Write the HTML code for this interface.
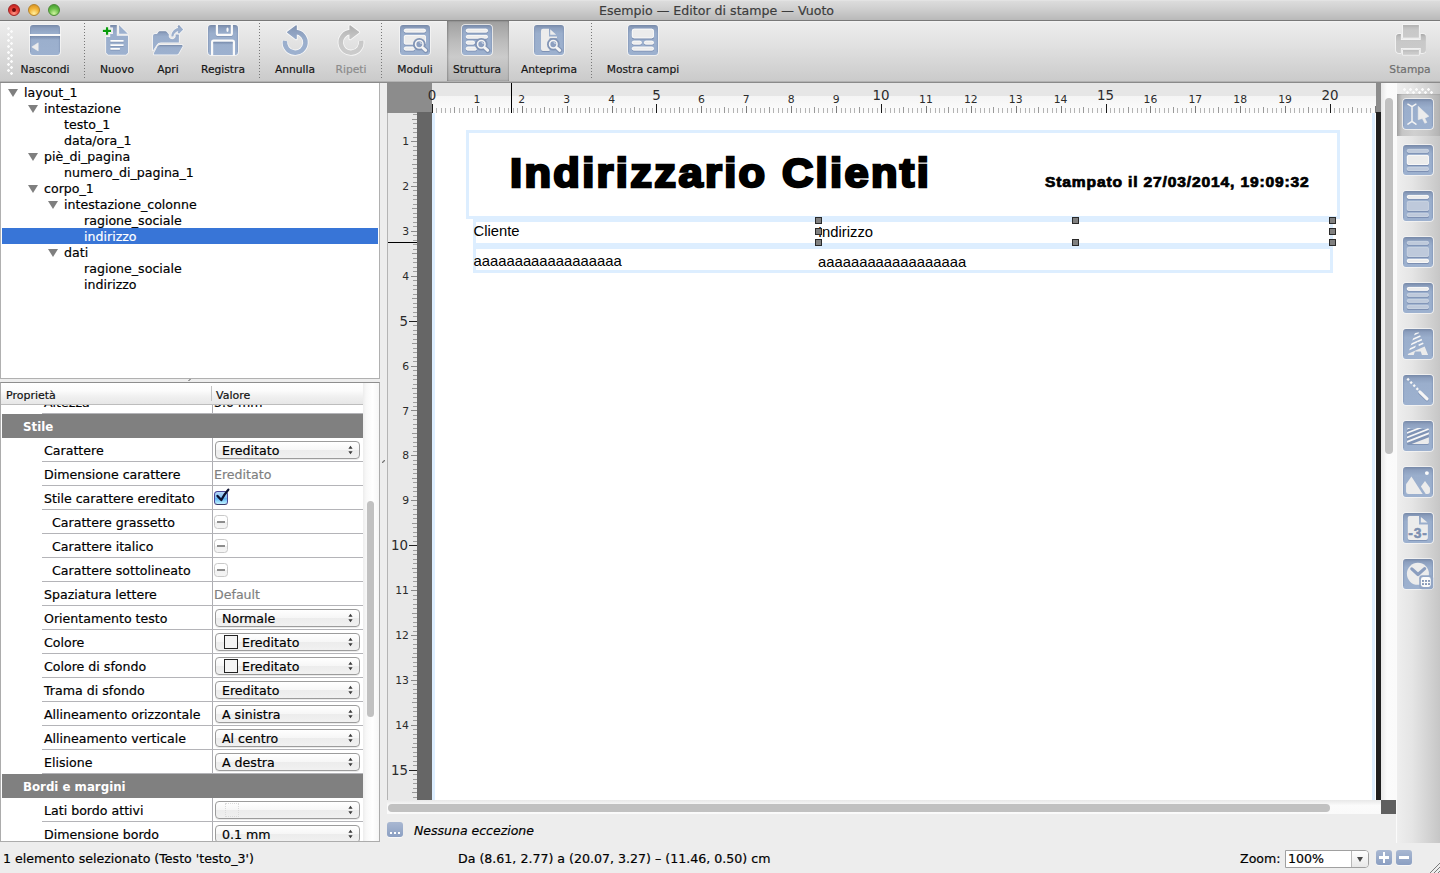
<!DOCTYPE html>
<html lang="it">
<head>
<meta charset="utf-8">
<title>Esempio — Editor di stampe — Vuoto</title>
<style>
*{box-sizing:border-box;margin:0;padding:0}
html,body{width:1440px;height:873px;overflow:hidden;background:#ededed}
body{position:relative;font-family:"DejaVu Sans","Liberation Sans",sans-serif;font-size:12.6px;color:#000;-webkit-text-stroke:.18px currentColor}
i,b{font-style:normal;font-weight:normal;display:block}
.abs{position:absolute}
/* ---- title bar */
#titlebar{position:absolute;left:0;top:0;width:1440px;height:21px;background:linear-gradient(#e8e8e8 0%,#dcdcdc 6%,#cfcfcf 45%,#b9b9b9 100%);border-bottom:1px solid #787878}
#titlebar .t{position:absolute;left:599px;top:3px;font-size:12.6px;color:#3c3c3c;line-height:16px;white-space:nowrap}
.tl{position:absolute;top:4px;width:12px;height:12px;border-radius:50%}
.tl.r{left:8px;background:radial-gradient(circle at 50% 85%,#ff9a8a 0%,#e8433a 45%,#b81c1c 100%);border:1px solid #a02222}
.tl.r:after{content:"";position:absolute;left:3px;top:3px;width:4px;height:4px;border-radius:50%;background:#6a0a0a}
.tl.y{left:28px;background:radial-gradient(circle at 50% 85%,#fff0a0 0%,#f3b53a 50%,#d08a1c 100%);border:1px solid #b5832a}
.tl.g{left:48px;background:radial-gradient(circle at 50% 85%,#d0f5a0 0%,#6cc04a 50%,#3c962a 100%);border:1px solid #4b8a36}
/* ---- toolbar */
#toolbar{position:absolute;left:0;top:21px;width:1440px;height:62px;background:linear-gradient(#f4f4f4 0,#ececec 2px,#e1e1e1 40%,#cacaca 100%);border-bottom:1px solid #8a8a8a}
#toolbar:after{content:"";position:absolute;left:0;right:0;bottom:0;height:1px;background:#b2b2b2}
.tb{position:absolute;top:0;width:32px;height:60px}
.tb svg{position:absolute;top:3px;left:0}
.tb span{position:absolute;top:42px;left:-40px;right:-40px;text-align:center;font-size:10.7px;line-height:14px;color:#151515;white-space:nowrap}
.tb.dis span{color:#8c8c8c}
.tb.dis.st span{color:#6e6e6e}
.sep{position:absolute;top:2px;height:56px;width:1px;background:repeating-linear-gradient(#777 0,#777 1px,rgba(0,0,0,0) 1px,rgba(0,0,0,0) 3px)}
.grip{position:absolute;left:7px;top:6px;width:6px;height:48px;background-image:radial-gradient(circle at 1.5px 1.5px,#fafafa 1px,rgba(255,255,255,0) 1.6px),radial-gradient(circle at 4.5px 4.5px,#fafafa 1px,rgba(255,255,255,0) 1.6px);background-size:6px 6px}
.pressed{position:absolute;left:447px;top:0;width:62px;height:60px;background:linear-gradient(#a0a0a0 0%,#bcbcbc 35%,#cbcbcb 60%,#b4b4b4 100%);box-shadow:inset 1px 0 2px rgba(0,0,0,.25),inset -1px 0 1px rgba(0,0,0,.12)}
/* ---- tree */
#tree{position:absolute;left:0;top:83px;width:380px;height:296px;background:#fff;border:1px solid #b0b0b0;border-top:0;overflow:hidden}
.tr{position:absolute;left:1px;width:376px;height:16px}
.tr span{position:absolute;top:1px;line-height:16px;white-space:nowrap}
.tr.sel{background:#3875d7;color:#fff}
.ar{position:absolute;top:5px;width:0;height:0;border-left:5px solid transparent;border-right:5px solid transparent;border-top:8px solid #7f7f7f}
#hsplit{position:absolute;left:188px;top:379px;width:3px;height:2px;background:linear-gradient(135deg,rgba(0,0,0,0) 20%,#777 50%,rgba(0,0,0,0) 80%)}
/* ---- properties */
#props{position:absolute;left:0;top:382px;width:380px;height:460px;background:#fff;border:1px solid #acacac;border-top-color:#8e8e8e;overflow:hidden}
.ph{position:absolute;left:0;top:0;width:362px;height:22px;background:linear-gradient(#fff 0%,#fcfcfc 35%,#f0f0f0 65%,#e7e7e7 100%);border-bottom:1px solid #bdbdbd;font-size:11px}
.ph span{position:absolute;top:5px;line-height:15px;color:#111}
.ph i{position:absolute;left:210px;top:3px;width:1px;height:15px;background:#c3c3c3}
.pbody{position:absolute;left:0;top:22px;width:363px;height:436px;overflow:hidden}
.pr{position:absolute;left:0;width:363px;height:24px}
.pr:after{content:"";position:absolute;left:41px;right:0;bottom:0;height:1px;background:#b4b4b8}
.pr:before{content:"";position:absolute;left:211px;top:0;bottom:0;width:1px;background:#adadb2}
.pr .n{position:absolute;left:42px;top:5px;line-height:16px;white-space:nowrap}
.pr .v{position:absolute;left:213px;top:5px;line-height:16px;white-space:nowrap}
.pr .v.gr{color:#7f7f7f}
.pg{position:absolute;left:1px;width:362px;height:24px;background:#808080;color:#fff;font-weight:bold;font-size:11.8px;-webkit-text-stroke:0}
.pg span{position:absolute;left:21px;top:5px;line-height:16px}
.cb{position:absolute;left:214px;top:3px;width:145px;height:18px;border:1px solid #9c9c9c;border-radius:4px;background:linear-gradient(#ffffff 0%,#f6f6f6 50%,#ececec 51%,#f1f1f1 100%);box-shadow:0 1px 0 rgba(0,0,0,.08)}
.cb span{position:absolute;left:6px;top:1px;line-height:16px;white-space:nowrap}
.cb .ud{position:absolute;right:6px;top:3px}
.sw{position:absolute;left:8px;top:1px;width:14px;height:14px;border:1px solid #222;background:#f4f4f4}
.bw{position:absolute;left:9px;top:1px;width:14px;height:14px;border:1px dotted #dadada}
.ck{position:absolute;left:213px;top:5px;width:14px;height:14px;border:1px solid #4a4596;border-bottom-color:#3a3a6a;border-radius:3.5px;background:linear-gradient(#b4d6f9 0%,#84c2f6 45%,#5fb2f5 55%,#9adcfb 80%,#c4f2ff 100%)}
.ck svg{position:absolute;left:-2px;top:-6px}
.tri{position:absolute;left:213px;top:5px;width:14px;height:14px;border:1px solid #c9c9c9;border-radius:3.5px;background:linear-gradient(#fff 0,#fff 50%,#f1f1f1 51%,#f4f4f4 100%)}
.tri i{position:absolute;left:2px;top:5px;width:8px;height:2px;background:#8e8e8e}
.psb{position:absolute;left:362px;top:0;width:16px;height:458px;background:linear-gradient(90deg,#ededed 0,#f8f8f8 20%,#fff 60%,#f6f6f6 100%)}
.psb i{position:absolute;left:4px;top:118px;width:7px;height:216px;border-radius:4px;background:#c1c1c1}
/* ---- vsplit */
#vsplit{position:absolute;left:382px;top:460px;width:3px;height:3px;background:linear-gradient(135deg,rgba(0,0,0,0) 20%,#777 50%,rgba(0,0,0,0) 80%)}
/* ---- canvas */
#canvas{position:absolute;left:387px;top:83px;width:1009px;height:731px;overflow:hidden;background:#fff}
#rcorner{position:absolute;left:0;top:0;width:45px;height:30px;background:#8c8c8c}
#hruler{position:absolute;left:45px;top:0;width:944px;height:30px;background:linear-gradient(#e6e6e6 0,#e6e6e6 13px,#f4f4f4 13px,#fdfdfd 100%);z-index:3}
#hruler span{position:absolute;-webkit-text-stroke:0;width:40px;text-align:center;color:#2b2b2b;white-space:nowrap}
#hruler .rb{top:5px;font-size:13.4px;line-height:16px}
#hruler .rs{top:10px;font-size:10.8px;line-height:14px}
#vruler{position:absolute;left:0;top:29px;width:30px;height:688px;background:#e9e9e9;overflow:hidden;border-left:1px solid #b4b4b4}
#vruler span{position:absolute;-webkit-text-stroke:0;right:8px;text-align:right;color:#2b2b2b;white-space:nowrap}
#vruler .vb{font-size:13.4px;line-height:16px;right:9px}
#vruler .vs{font-size:10.8px;line-height:16px}
#vruler .cur{position:absolute;left:0;top:130px;width:45px;height:1px;background:#000}
#vband{position:absolute;left:30px;top:29px;width:15px;height:688px;background:#666}
#hcur{position:absolute;left:124px;top:0;z-index:4;width:1px;height:30px;background:#000}
#rband{position:absolute;left:989px;top:29px;width:5px;height:688px;background:#1f1f1f}
#rband:before{content:"";position:absolute;left:0;top:-29px;width:5px;height:29px;background:#8c8c8c}
#vsb{position:absolute;left:994px;top:0;width:15px;height:717px;background:linear-gradient(90deg,#e8e8e8,#fbfbfb 40%,#fafafa)}
#vsb i{position:absolute;left:4px;top:15px;width:8px;height:356px;border-radius:4px;background:#c1c1c1}
#hsb{position:absolute;left:0;top:717px;width:994px;height:14px;background:linear-gradient(#e8e8e8,#fbfbfb 40%,#fafafa)}
#hsb i{position:absolute;left:1px;top:4px;width:942px;height:8px;border-radius:4px;background:#c1c1c1}
#sbcorner{position:absolute;left:994px;top:717px;width:15px;height:14px;background:#606060}
#page{position:absolute;left:45px;top:29px;width:944px;height:688px;background:#fff;overflow:hidden}
/* ---- msg */
#msg{position:absolute;left:380px;top:815px;width:1016px;height:30px}
#msg .mi{position:absolute;left:7px;top:7px;width:16px;height:15px;border-radius:3px;background:linear-gradient(#a9b8d2,#8b9fc2);box-shadow:0 1px 0 #f8f8f8}
#msg .mi b{position:absolute;top:10px;width:2px;height:2px;background:#fff}
#msg .mi b:nth-child(1){left:3px}#msg .mi b:nth-child(2){left:7px}#msg .mi b:nth-child(3){left:11px}
#msg span{position:absolute;left:34px;top:8px;font-size:12.5px;line-height:16px;font-style:italic;white-space:nowrap}
/* ---- toolbox */
#toolbox{position:absolute;left:1396px;top:83px;width:44px;height:760px;background:linear-gradient(90deg,#eeeeee 0%,#e5e5e5 35%,#c6c6c6 100%);border-left:1px solid #fbfbfb}
.tsel{position:absolute;left:0;top:11px;width:43px;height:42px;background:linear-gradient(90deg,#a2a2a2 0,#c6c6c6 12%,#d0d0d0 40%,#c8c8c8 70%,#b2b2b2 100%);box-shadow:inset 0 1px 1px rgba(0,0,0,.08)}
.tool{position:absolute;left:5px;width:32px;height:32px}
.tgrip{position:absolute;left:6px;top:5px;width:30px;height:6px;background-image:radial-gradient(circle at 1.5px 1.5px,#fafafa 1px,rgba(255,255,255,0) 1.6px),radial-gradient(circle at 4.5px 4.5px,#fafafa 1px,rgba(255,255,255,0) 1.6px);background-size:6px 6px}
/* ---- status */
#status{position:absolute;left:0;top:843px;width:1440px;height:30px;background:#ededed}
#status span{position:absolute;top:8px;line-height:16px;white-space:nowrap}
#status .s1{left:3px}
#status .s2{left:458px}
#status .s3{left:1240px}
.zc{position:absolute;left:1285px;top:7px;width:84px;height:18px;border:1px solid #a0a0a0;border-radius:0 4px 4px 0;background:#fff}
.zc span{left:2px;top:0 !important;line-height:16px}
.zc i{position:absolute;right:0;top:0;width:17px;height:16px;border-left:1px solid #b8b8b8;background:linear-gradient(#fff,#e8e8e8);border-radius:0 3px 3px 0}
.zc b{position:absolute;right:5px;top:6px;width:0;height:0;border-left:3.5px solid transparent;border-right:3.5px solid transparent;border-top:5px solid #4a4a4a}
.zb{position:absolute;top:7px;width:16px;height:15px;border-radius:3px;background:linear-gradient(#a9b8d2,#8b9fc2);box-shadow:0 1px 0 #f8f8f8}
.zb .h{position:absolute;left:3px;top:6px;width:10px;height:2.5px;background:#fff}
.zb .v{position:absolute;left:6.75px;top:2px;width:2.5px;height:10.5px;background:#fff}
.rsz{position:absolute;right:-2px;bottom:-2px}
/* ---- page content */
.pgl{position:absolute;top:0;width:3px;height:688px;background:#ddeeff}
.bx{position:absolute;border:3px solid #ddeeff}
.bx.b2{border-width:3.4px}
.ttl{position:absolute;left:77.5px;top:36px;font-family:"Liberation Sans",sans-serif;font-weight:bold;font-size:40.5px;line-height:50px;white-space:nowrap;color:#000;-webkit-text-stroke:2.5px #000;letter-spacing:2.2px;transform:scaleX(1.072);transform-origin:0 0}
.dat{position:absolute;left:612.5px;top:61px;font-family:"Liberation Sans",sans-serif;font-weight:bold;font-size:13.8px;line-height:20px;white-space:nowrap;color:#000;-webkit-text-stroke:.7px #000;letter-spacing:.75px;transform:scaleX(1.13);transform-origin:0 0}
.tx{position:absolute;-webkit-text-stroke:0;font-family:"Liberation Sans",sans-serif;font-size:14.8px;line-height:18px;white-space:nowrap;color:#000}
.hd{position:absolute;width:7px;height:7px;background:#808080;border:1px solid #2a2a2a}

</style>
</head>
<body>
<svg width="0" height="0" style="position:absolute"><defs><linearGradient id="gb" x1="0" y1="0" x2="0" y2="1"><stop offset="0" stop-color="#7688a7"/><stop offset=".1" stop-color="#8c9fbe"/><stop offset=".28" stop-color="#9aaecc"/><stop offset="1" stop-color="#9db1cf"/></linearGradient><linearGradient id="gg" x1="0" y1="0" x2="0" y2="1"><stop offset="0" stop-color="#a9a9a9"/><stop offset=".15" stop-color="#bdbdbd"/><stop offset=".4" stop-color="#c8c8c8"/><stop offset="1" stop-color="#cbcbcb"/></linearGradient><linearGradient id="gs" x1="0" y1="0" x2="0" y2="1"><stop offset="0" stop-color="#5a6d90" stop-opacity=".55"/><stop offset="1" stop-color="#5a6d90" stop-opacity="0"/></linearGradient><linearGradient id="gb2" gradientUnits="userSpaceOnUse" x1="0" y1="1" x2="0" y2="31"><stop offset="0" stop-color="#7c8eae"/><stop offset=".2" stop-color="#8c9fbe"/><stop offset=".5" stop-color="#9aaecc"/><stop offset="1" stop-color="#9db1cf"/></linearGradient><linearGradient id="gg2" gradientUnits="userSpaceOnUse" x1="0" y1="1" x2="0" y2="31"><stop offset="0" stop-color="#adadad"/><stop offset=".3" stop-color="#bfbfbf"/><stop offset=".6" stop-color="#c9c9c9"/><stop offset="1" stop-color="#cbcbcb"/></linearGradient></defs></svg>
<div id="titlebar"><i class="tl r"></i><i class="tl y"></i><i class="tl g"></i><div class="t">Esempio — Editor di stampe — Vuoto</div></div>
<div id="toolbar">
<div class="grip"></div>
<div class="sep" style="left:84px"></div>
<div class="sep" style="left:259px"></div>
<div class="sep" style="left:381px"></div>
<div class="sep" style="left:591px"></div>
<div class="pressed"></div>
<div class="tb" style="left:29px"><svg width="32" height="32" viewBox="0 0 32 32"><path d="M4 1H28Q31 1 31 4V28Q31 31 28 31H4Q1 31 1 28V4Q1 1 4 1Z" fill="url(#gb)" stroke="#f6f6f6" stroke-width="1.5" stroke-linejoin="round" paint-order="stroke"/><path d="M1.600 4V28M30.400 4V28" stroke="#7f92b3" stroke-width="1" opacity=".55"/><rect x="1" y="12" width="30" height="4" fill="url(#gs)"/><rect x=".2" y="10" width="31.600" height="2" fill="#fafafa"/><path d="M9.200 18.800V27L2.800 22.900Z" fill="#ececec" stroke="#ececec" stroke-width=".6" stroke-linejoin="round"/></svg><span>Nascondi</span></div>
<div class="tb" style="left:101px"><svg width="32" height="32" viewBox="0 0 32 32"><path d="M9.200 1.100H15.800V11.800H27V28.800L25 30.800H7.100L5.100 28.800V13H9.200V10H11.900V3.600H9.200Z" fill="url(#gb)" stroke="#f6f6f6" stroke-width="1.5" stroke-linejoin="round" paint-order="stroke"/><path d="M18.100 1.200L26.800 9.750H18.100Z" fill="url(#gb)" stroke="#f6f6f6" stroke-width="1.5" stroke-linejoin="round" paint-order="stroke"/><path d="M1.900 6.950H10M6.050 3.200V10.800" stroke="#fbfbfb" stroke-width="4"/><path d="M1.900 6.950H10M6.050 3.200V10.800" stroke="#0a9c0c" stroke-width="2.300"/><path d="M9.400 17.700H22.600M9.400 21.900H22.600M9.400 25.700H18.900" stroke="#5f7299" stroke-width="1.700" opacity=".5"/><path d="M9.400 16.950H22.600M9.400 21.100H22.600M9.400 24.950H18.900" stroke="#fdfdfd" stroke-width="1.700"/></svg><span>Nuovo</span></div>
<div class="tb" style="left:152px"><svg width="32" height="32" viewBox="0 0 32 32"><path d="M1 26.400V12Q1 10.200 3 10H5L6.400 7.900Q6.800 7.300 7.600 7.300H13.400Q14.200 7.300 14.800 8L16.900 10.600A3.500 3.500 0 1 0 23.500 10.600H26.900V18.600H9Q6 18.600 4.600 21Z" fill="url(#gb)" stroke="#f6f6f6" stroke-width="1.5" stroke-linejoin="round" paint-order="stroke"/><path d="M2.200 30.600Q1.500 30 2 29L5.400 22.600Q6.200 21.100 8 21.100H29.800Q31 21.200 30.500 22.400L26.400 29.800Q25.900 30.600 24.900 30.600Z" fill="url(#gb)" stroke="#f6f6f6" stroke-width="1.5" stroke-linejoin="round" paint-order="stroke"/><path d="M19.300 12.600C19.300 8 22.500 4.600 26.200 4.100L25.500 2.300L27 1L31.200 5.400L27 9.800L25.600 8.600L26.300 7.100C23.800 7.600 21.600 9.800 21.400 12.600Z" fill="url(#gb)" stroke="#f6f6f6" stroke-width="1.5" stroke-linejoin="round" paint-order="stroke"/></svg><span>Apri</span></div>
<div class="tb" style="left:207px"><svg width="32" height="32" viewBox="0 0 32 32"><path d="M4 1H28Q31 1 31 4V28Q31 31 28 31H4Q1 31 1 28V4Q1 1 4 1Z" fill="url(#gb)" stroke="#f6f6f6" stroke-width="1.5" stroke-linejoin="round" paint-order="stroke"/><path d="M1.600 4V28M30.400 4V28" stroke="#7f92b3" stroke-width="1" opacity=".55"/><path d="M9.900 1V9.400Q9.900 10.900 11.400 10.900H23.350Q24.850 10.900 24.850 9.400V1" fill="none" stroke="#5f7299" stroke-width="2.200" opacity=".35" transform="translate(0,1)"/><path d="M9.900 .6V9.400Q9.900 10.900 11.400 10.900H23.350Q24.850 10.900 24.850 9.400V.6" fill="none" stroke="#fafafa" stroke-width="2.200"/><path d="M5.100 31.400V18.150Q5.100 16.650 6.600 16.650H25.400Q26.900 16.650 26.900 18.150V31.400" fill="none" stroke="#fafafa" stroke-width="2.200"/><rect x="6.200" y="17.800" width="19.600" height="3" fill="url(#gs)"/><ellipse cx="20.500" cy="5.750" rx="1.100" ry="2.300" fill="#fafafa"/></svg><span>Registra</span></div>
<div class="tb" style="left:279px"><svg width="32" height="32" viewBox="0 0 32 32"><g><path d="M16.800 8.100A10.300 10.300 0 1 1 6.020 16.800" fill="none" stroke="#f8f8f8" stroke-width="6.200"/><path d="M8.500 8.300L17.200 1.800V14.800Z" fill="#f8f8f8" stroke="#f8f8f8" stroke-width="3" stroke-linejoin="round"/><path d="M16.800 8.100A10.300 10.300 0 1 1 6.020 16.800" fill="none" stroke="url(#gb2)" stroke-width="4.500"/><path d="M8.700 8.300L17.100 2V14.600Z" fill="url(#gb2)" stroke="url(#gb2)" stroke-width="1.400" stroke-linejoin="round"/></g></svg><span>Annulla</span></div>
<div class="tb dis" style="left:335px"><svg width="32" height="32" viewBox="0 0 32 32"><g transform="translate(32.200,0) scale(-1,1)"><path d="M16.800 8.100A10.300 10.300 0 1 1 6.020 16.800" fill="none" stroke="#f8f8f8" stroke-width="6.200"/><path d="M8.500 8.300L17.200 1.800V14.800Z" fill="#f8f8f8" stroke="#f8f8f8" stroke-width="3" stroke-linejoin="round"/><path d="M16.800 8.100A10.300 10.300 0 1 1 6.020 16.800" fill="none" stroke="url(#gg2)" stroke-width="4.500"/><path d="M8.700 8.300L17.100 2V14.600Z" fill="url(#gg2)" stroke="url(#gg2)" stroke-width="1.400" stroke-linejoin="round"/></g></svg><span>Ripeti</span></div>
<div class="tb" style="left:399px"><svg width="32" height="32" viewBox="0 0 32 32"><path d="M4 1H28Q31 1 31 4V28Q31 31 28 31H4Q1 31 1 28V4Q1 1 4 1Z" fill="url(#gb)" stroke="#f6f6f6" stroke-width="1.5" stroke-linejoin="round" paint-order="stroke"/><path d="M1.600 4V28M30.400 4V28" stroke="#7f92b3" stroke-width="1" opacity=".55"/><rect x="4.90" y="5.90" width="22.00" height="3.60" rx="1.70" fill="#60739a" opacity=".55"/><rect x="4.90" y="4.80" width="22.00" height="3.60" rx="1.70" fill="#ececec"/><rect x="5.30" y="5.20" width="21.20" height="2.80" rx="1.70" fill="none" stroke="#fbfbfb" stroke-width=".8"/><rect x="4.90" y="12.10" width="22.00" height="9.50" rx="1.60" fill="#60739a" opacity=".55"/><rect x="4.90" y="11.00" width="22.00" height="9.50" rx="1.60" fill="#ececec"/><rect x="5.30" y="11.40" width="21.20" height="8.70" rx="1.60" fill="none" stroke="#fbfbfb" stroke-width=".8"/><rect x="4.90" y="23.80" width="11.00" height="3.80" rx="1.70" fill="#60739a" opacity=".55"/><rect x="4.90" y="22.70" width="11.00" height="3.80" rx="1.70" fill="#ececec"/><rect x="5.30" y="23.10" width="10.20" height="3.00" rx="1.70" fill="none" stroke="#fbfbfb" stroke-width=".8"/><circle cx="20.3" cy="20.3" r="6.3" fill="#8194b5"/><path d="M23.400 23.400L26.800 26.500" stroke="#8194b5" stroke-width="5.200" stroke-linecap="round"/><circle cx="20.3" cy="20.3" r="3.75" fill="#8c9fc0" stroke="#f4f4f4" stroke-width="1.600"/><path d="M20.600 18.300A2 2 0 0 1 22.300 20" stroke="#e8ecf3" stroke-width=".9" fill="none"/><path d="M23.500 23.500L26.700 26.400" stroke="#f4f4f4" stroke-width="2.900" stroke-linecap="round"/></svg><span>Moduli</span></div>
<div class="tb" style="left:461px"><svg width="32" height="32" viewBox="0 0 32 32"><path d="M4 1H28Q31 1 31 4V28Q31 31 28 31H4Q1 31 1 28V4Q1 1 4 1Z" fill="url(#gb)" stroke="#f6f6f6" stroke-width="1.5" stroke-linejoin="round" paint-order="stroke"/><path d="M1.600 4V28M30.400 4V28" stroke="#7f92b3" stroke-width="1" opacity=".55"/><rect x="4.90" y="5.90" width="22.00" height="3.70" rx="1.70" fill="#60739a" opacity=".55"/><rect x="4.90" y="4.80" width="22.00" height="3.70" rx="1.70" fill="#ececec"/><rect x="5.30" y="5.20" width="21.20" height="2.90" rx="1.70" fill="none" stroke="#fbfbfb" stroke-width=".8"/><rect x="4.90" y="12.10" width="22.00" height="3.60" rx="1.70" fill="#60739a" opacity=".55"/><rect x="4.90" y="11.00" width="22.00" height="3.60" rx="1.70" fill="#ececec"/><rect x="5.30" y="11.40" width="21.20" height="2.80" rx="1.70" fill="none" stroke="#fbfbfb" stroke-width=".8"/><rect x="4.90" y="17.90" width="9.00" height="3.70" rx="1.70" fill="#60739a" opacity=".55"/><rect x="4.90" y="16.80" width="9.00" height="3.70" rx="1.70" fill="#ececec"/><rect x="5.30" y="17.20" width="8.20" height="2.90" rx="1.70" fill="none" stroke="#fbfbfb" stroke-width=".8"/><rect x="4.90" y="23.80" width="11.00" height="3.80" rx="1.70" fill="#60739a" opacity=".55"/><rect x="4.90" y="22.70" width="11.00" height="3.80" rx="1.70" fill="#ececec"/><rect x="5.30" y="23.10" width="10.20" height="3.00" rx="1.70" fill="none" stroke="#fbfbfb" stroke-width=".8"/><circle cx="20.3" cy="20.3" r="6.3" fill="#8194b5"/><path d="M23.400 23.400L26.800 26.500" stroke="#8194b5" stroke-width="5.200" stroke-linecap="round"/><circle cx="20.3" cy="20.3" r="3.75" fill="#8c9fc0" stroke="#f4f4f4" stroke-width="1.600"/><path d="M20.600 18.300A2 2 0 0 1 22.300 20" stroke="#e8ecf3" stroke-width=".9" fill="none"/><path d="M23.500 23.500L26.700 26.400" stroke="#f4f4f4" stroke-width="2.900" stroke-linecap="round"/></svg><span>Struttura</span></div>
<div class="tb" style="left:533px"><svg width="32" height="32" viewBox="0 0 32 32"><path d="M4 1H28Q31 1 31 4V28Q31 31 28 31H4Q1 31 1 28V4Q1 1 4 1Z" fill="url(#gb)" stroke="#f6f6f6" stroke-width="1.5" stroke-linejoin="round" paint-order="stroke"/><path d="M1.600 4V28M30.400 4V28" stroke="#7f92b3" stroke-width="1" opacity=".55"/><path d="M10 5.900H16V13.700H24V15.400H16.600V28H10Q8 28 8 26V7.900Q8 5.900 10 5.900Z" fill="#60739a" opacity=".5"/><path d="M10 4.800H16V12.600H24V14.300H16.600V26.900H10Q8 26.900 8 24.900V6.800Q8 4.800 10 4.800Z" fill="#ececec"/><path d="M17.200 5.200L23.200 10.800H17.200Z" fill="#ececec"/><circle cx="20.3" cy="20.3" r="6.3" fill="#8194b5"/><path d="M23.400 23.400L26.800 26.500" stroke="#8194b5" stroke-width="5.200" stroke-linecap="round"/><circle cx="20.3" cy="20.3" r="3.75" fill="#8c9fc0" stroke="#f4f4f4" stroke-width="1.600"/><path d="M20.600 18.300A2 2 0 0 1 22.300 20" stroke="#e8ecf3" stroke-width=".9" fill="none"/><path d="M23.500 23.500L26.700 26.400" stroke="#f4f4f4" stroke-width="2.900" stroke-linecap="round"/></svg><span>Anteprima</span></div>
<div class="tb" style="left:627px"><svg width="32" height="32" viewBox="0 0 32 32"><path d="M4 1H28Q31 1 31 4V28Q31 31 28 31H4Q1 31 1 28V4Q1 1 4 1Z" fill="url(#gb)" stroke="#f6f6f6" stroke-width="1.5" stroke-linejoin="round" paint-order="stroke"/><path d="M1.600 4V28M30.400 4V28" stroke="#7f92b3" stroke-width="1" opacity=".55"/><rect x="4.90" y="5.90" width="22.00" height="9.50" rx="2.00" fill="#60739a" opacity=".55"/><rect x="4.90" y="4.80" width="22.00" height="9.50" rx="2.00" fill="#ececec"/><rect x="5.30" y="5.20" width="21.20" height="8.70" rx="2.00" fill="none" stroke="#fbfbfb" stroke-width=".8"/><rect x="4.90" y="17.90" width="9.90" height="3.70" rx="1.80" fill="#60739a" opacity=".55"/><rect x="4.90" y="16.80" width="9.90" height="3.70" rx="1.80" fill="#ececec"/><rect x="5.30" y="17.20" width="9.10" height="2.90" rx="1.80" fill="none" stroke="#fbfbfb" stroke-width=".8"/><rect x="17.00" y="17.90" width="9.90" height="3.70" rx="1.80" fill="#60739a" opacity=".55"/><rect x="17.00" y="16.80" width="9.90" height="3.70" rx="1.80" fill="#ececec"/><rect x="17.40" y="17.20" width="9.10" height="2.90" rx="1.80" fill="none" stroke="#fbfbfb" stroke-width=".8"/><rect x="4.90" y="23.80" width="22.00" height="3.80" rx="1.80" fill="#60739a" opacity=".55"/><rect x="4.90" y="22.70" width="22.00" height="3.80" rx="1.80" fill="#ececec"/><rect x="5.30" y="23.10" width="21.20" height="3.00" rx="1.80" fill="none" stroke="#fbfbfb" stroke-width=".8"/></svg><span>Mostra campi</span></div>
<div class="tb dis st" style="left:1394px"><svg width="32" height="32" viewBox="0 0 32 32"><path d="M5 10H6.900V15.900H26.700V10H28.900Q31.900 10 31.900 13V25.900Q31.900 28.900 28.900 28.900H26.700V24H6.900V28.900H5Q2 28.900 2 25.900V13Q2 10 5 10Z" fill="url(#gg)" stroke="#f6f6f6" stroke-width="1.5" stroke-linejoin="round" paint-order="stroke"/><rect x="9" y="1.100" width="15.900" height="12.600" fill="url(#gg)" stroke="#f6f6f6" stroke-width="1.5" stroke-linejoin="round" paint-order="stroke"/><rect x="9" y="26.200" width="15.900" height="4.600" fill="url(#gg)" stroke="#f6f6f6" stroke-width="1.5" stroke-linejoin="round" paint-order="stroke"/></svg><span>Stampa</span></div>
</div>
<div id="tree">
<div class="tr" style="top:1px"><b class="ar" style="left:6px"></b><span style="left:22px">layout_1</span></div>
<div class="tr" style="top:17px"><b class="ar" style="left:26px"></b><span style="left:42px">intestazione</span></div>
<div class="tr" style="top:33px"><span style="left:62px">testo_1</span></div>
<div class="tr" style="top:49px"><span style="left:62px">data/ora_1</span></div>
<div class="tr" style="top:65px"><b class="ar" style="left:26px"></b><span style="left:42px">piè_di_pagina</span></div>
<div class="tr" style="top:81px"><span style="left:62px">numero_di_pagina_1</span></div>
<div class="tr" style="top:97px"><b class="ar" style="left:26px"></b><span style="left:42px">corpo_1</span></div>
<div class="tr" style="top:113px"><b class="ar" style="left:46px"></b><span style="left:62px">intestazione_colonne</span></div>
<div class="tr" style="top:129px"><span style="left:82px">ragione_sociale</span></div>
<div class="tr sel" style="top:145px"><span style="left:82px">indirizzo</span></div>
<div class="tr" style="top:161px"><b class="ar" style="left:46px"></b><span style="left:62px">dati</span></div>
<div class="tr" style="top:177px"><span style="left:82px">ragione_sociale</span></div>
<div class="tr" style="top:193px"><span style="left:82px">indirizzo</span></div>
</div>
<div id="hsplit"></div>
<div id="props">
<div class="ph"><span style="left:5px">Proprietà</span><i></i><span style="left:215px">Valore</span></div>
<div class="pbody">
<div class="pr" style="top:-15px"><span class="n" style="left:43px">Altezza</span><span class="v">5.0 mm</span></div>
<div class="pg" style="top:9px"><span>Stile</span></div>
<div class="pr" style="top:33px"><span class="n" style="left:43px">Carattere</span><div class="cb"><span>Ereditato</span><svg class="ud" width="5" height="10" viewBox="0 0 5 10"><path d="M0.400 3.800L2.500 0.800L4.600 3.800Z M0.400 6.200L2.500 9.200L4.600 6.200Z" fill="#3a3a3a"/></svg></div></div>
<div class="pr" style="top:57px"><span class="n" style="left:43px">Dimensione carattere</span><span class="v gr">Ereditato</span></div>
<div class="pr" style="top:81px"><span class="n" style="left:43px">Stile carattere ereditato</span><div class="ck"><svg width="18" height="18" viewBox="0 0 18 18"><path d="M4.500 9.900L8.300 14.100Q11.400 8 15.300 3.700" fill="none" stroke="#0b1030" stroke-width="2.300" stroke-linecap="round" stroke-linejoin="round"/></svg></div></div>
<div class="pr" style="top:105px"><span class="n" style="left:51px">Carattere grassetto</span><div class="tri"><i></i></div></div>
<div class="pr" style="top:129px"><span class="n" style="left:51px">Carattere italico</span><div class="tri"><i></i></div></div>
<div class="pr" style="top:153px"><span class="n" style="left:51px">Carattere sottolineato</span><div class="tri"><i></i></div></div>
<div class="pr" style="top:177px"><span class="n" style="left:43px">Spaziatura lettere</span><span class="v gr">Default</span></div>
<div class="pr" style="top:201px"><span class="n" style="left:43px">Orientamento testo</span><div class="cb"><span>Normale</span><svg class="ud" width="5" height="10" viewBox="0 0 5 10"><path d="M0.400 3.800L2.500 0.800L4.600 3.800Z M0.400 6.200L2.500 9.200L4.600 6.200Z" fill="#3a3a3a"/></svg></div></div>
<div class="pr" style="top:225px"><span class="n" style="left:43px">Colore</span><div class="cb"><i class="sw"></i><span style="left:26px">Ereditato</span><svg class="ud" width="5" height="10" viewBox="0 0 5 10"><path d="M0.400 3.800L2.500 0.800L4.600 3.800Z M0.400 6.200L2.500 9.200L4.600 6.200Z" fill="#3a3a3a"/></svg></div></div>
<div class="pr" style="top:249px"><span class="n" style="left:43px">Colore di sfondo</span><div class="cb"><i class="sw"></i><span style="left:26px">Ereditato</span><svg class="ud" width="5" height="10" viewBox="0 0 5 10"><path d="M0.400 3.800L2.500 0.800L4.600 3.800Z M0.400 6.200L2.500 9.200L4.600 6.200Z" fill="#3a3a3a"/></svg></div></div>
<div class="pr" style="top:273px"><span class="n" style="left:43px">Trama di sfondo</span><div class="cb"><span>Ereditato</span><svg class="ud" width="5" height="10" viewBox="0 0 5 10"><path d="M0.400 3.800L2.500 0.800L4.600 3.800Z M0.400 6.200L2.500 9.200L4.600 6.200Z" fill="#3a3a3a"/></svg></div></div>
<div class="pr" style="top:297px"><span class="n" style="left:43px">Allineamento orizzontale</span><div class="cb"><span>A sinistra</span><svg class="ud" width="5" height="10" viewBox="0 0 5 10"><path d="M0.400 3.800L2.500 0.800L4.600 3.800Z M0.400 6.200L2.500 9.200L4.600 6.200Z" fill="#3a3a3a"/></svg></div></div>
<div class="pr" style="top:321px"><span class="n" style="left:43px">Allineamento verticale</span><div class="cb"><span>Al centro</span><svg class="ud" width="5" height="10" viewBox="0 0 5 10"><path d="M0.400 3.800L2.500 0.800L4.600 3.800Z M0.400 6.200L2.500 9.200L4.600 6.200Z" fill="#3a3a3a"/></svg></div></div>
<div class="pr" style="top:345px"><span class="n" style="left:43px">Elisione</span><div class="cb"><span>A destra</span><svg class="ud" width="5" height="10" viewBox="0 0 5 10"><path d="M0.400 3.800L2.500 0.800L4.600 3.800Z M0.400 6.200L2.500 9.200L4.600 6.200Z" fill="#3a3a3a"/></svg></div></div>
<div class="pg" style="top:369px"><span>Bordi e margini</span></div>
<div class="pr" style="top:393px"><span class="n" style="left:43px">Lati bordo attivi</span><div class="cb"><i class="bw"></i><svg class="ud" width="5" height="10" viewBox="0 0 5 10"><path d="M0.400 3.800L2.500 0.800L4.600 3.800Z M0.400 6.200L2.500 9.200L4.600 6.200Z" fill="#3a3a3a"/></svg></div></div>
<div class="pr" style="top:417px"><span class="n" style="left:43px">Dimensione bordo</span><div class="cb"><span>0.1 mm</span><svg class="ud" width="5" height="10" viewBox="0 0 5 10"><path d="M0.400 3.800L2.500 0.800L4.600 3.800Z M0.400 6.200L2.500 9.200L4.600 6.200Z" fill="#3a3a3a"/></svg></div></div>
</div>
<div class="psb"><i></i></div>
</div>
<div id="vsplit"></div>
<div id="canvas">
<div id="page">
<i class="pgl" style="left:0"></i><i class="pgl" style="left:940px"></i>
<div class="bx" style="left:34px;top:17.5px;width:874px;height:89.5px"></div>
<div class="bx b2" style="left:41.300px;top:107px;width:860px;height:27.3px"></div>
<div class="bx b2" style="left:41.300px;top:134.300px;width:860px;height:26.900px"></div>
<div class="ttl">Indirizzario Clienti</div>
<div class="dat">Stampato il 27/03/2014, 19:09:32</div>
<div class="tx" style="left:41.500px;top:110px">Cliente</div>
<div class="tx" style="left:386px;top:111px">Indirizzo</div>
<div class="tx" style="left:41.500px;top:140px">aaaaaaaaaaaaaaaaaa</div>
<div class="tx" style="left:386px;top:141px">aaaaaaaaaaaaaaaaaa</div>
<i class="hd" style="left:383px;top:105px"></i><i class="hd" style="left:640px;top:105px"></i><i class="hd" style="left:897px;top:105px"></i>
<i class="hd" style="left:383px;top:116px"></i><i class="hd" style="left:897px;top:116px"></i>
<i class="hd" style="left:383px;top:127px"></i><i class="hd" style="left:640px;top:127px"></i><i class="hd" style="left:897px;top:127px"></i>
</div>
<div id="hruler"><svg class="abs" style="left:0;top:0" width="949" height="30" viewBox="0 0 949 30" shape-rendering="crispEdges"><line x1="0.5" x2="0.5" y1="21" y2="30" stroke="#1a1a1a"/><line x1="4.5" x2="4.5" y1="24.5" y2="30" stroke="#b4b4b4"/><line x1="9.5" x2="9.5" y1="24.5" y2="30" stroke="#b4b4b4"/><line x1="13.5" x2="13.5" y1="24.5" y2="30" stroke="#b4b4b4"/><line x1="18.5" x2="18.5" y1="24.5" y2="30" stroke="#b4b4b4"/><line x1="22.5" x2="22.5" y1="23.5" y2="30" stroke="#9a9a9a"/><line x1="27.5" x2="27.5" y1="24.5" y2="30" stroke="#b4b4b4"/><line x1="31.5" x2="31.5" y1="24.5" y2="30" stroke="#b4b4b4"/><line x1="36.5" x2="36.5" y1="24.5" y2="30" stroke="#b4b4b4"/><line x1="40.5" x2="40.5" y1="24.5" y2="30" stroke="#b4b4b4"/><line x1="45.5" x2="45.5" y1="23" y2="30" stroke="#7a7a7a"/><line x1="49.5" x2="49.5" y1="24.5" y2="30" stroke="#b4b4b4"/><line x1="54.5" x2="54.5" y1="24.5" y2="30" stroke="#b4b4b4"/><line x1="58.5" x2="58.5" y1="24.5" y2="30" stroke="#b4b4b4"/><line x1="63.5" x2="63.5" y1="24.5" y2="30" stroke="#b4b4b4"/><line x1="67.5" x2="67.5" y1="23.5" y2="30" stroke="#9a9a9a"/><line x1="72.5" x2="72.5" y1="24.5" y2="30" stroke="#b4b4b4"/><line x1="76.5" x2="76.5" y1="24.5" y2="30" stroke="#b4b4b4"/><line x1="81.5" x2="81.5" y1="24.5" y2="30" stroke="#b4b4b4"/><line x1="85.5" x2="85.5" y1="24.5" y2="30" stroke="#b4b4b4"/><line x1="90.5" x2="90.5" y1="23" y2="30" stroke="#7a7a7a"/><line x1="94.5" x2="94.5" y1="24.5" y2="30" stroke="#b4b4b4"/><line x1="99.5" x2="99.5" y1="24.5" y2="30" stroke="#b4b4b4"/><line x1="103.5" x2="103.5" y1="24.5" y2="30" stroke="#b4b4b4"/><line x1="108.5" x2="108.5" y1="24.5" y2="30" stroke="#b4b4b4"/><line x1="112.5" x2="112.5" y1="23.5" y2="30" stroke="#9a9a9a"/><line x1="117.5" x2="117.5" y1="24.5" y2="30" stroke="#b4b4b4"/><line x1="121.5" x2="121.5" y1="24.5" y2="30" stroke="#b4b4b4"/><line x1="126.5" x2="126.5" y1="24.5" y2="30" stroke="#b4b4b4"/><line x1="130.5" x2="130.5" y1="24.5" y2="30" stroke="#b4b4b4"/><line x1="135.5" x2="135.5" y1="23" y2="30" stroke="#7a7a7a"/><line x1="139.5" x2="139.5" y1="24.5" y2="30" stroke="#b4b4b4"/><line x1="144.5" x2="144.5" y1="24.5" y2="30" stroke="#b4b4b4"/><line x1="148.5" x2="148.5" y1="24.5" y2="30" stroke="#b4b4b4"/><line x1="153.5" x2="153.5" y1="24.5" y2="30" stroke="#b4b4b4"/><line x1="157.5" x2="157.5" y1="23.5" y2="30" stroke="#9a9a9a"/><line x1="162.5" x2="162.5" y1="24.5" y2="30" stroke="#b4b4b4"/><line x1="166.5" x2="166.5" y1="24.5" y2="30" stroke="#b4b4b4"/><line x1="171.5" x2="171.5" y1="24.5" y2="30" stroke="#b4b4b4"/><line x1="175.5" x2="175.5" y1="24.5" y2="30" stroke="#b4b4b4"/><line x1="180.5" x2="180.5" y1="23" y2="30" stroke="#7a7a7a"/><line x1="184.5" x2="184.5" y1="24.5" y2="30" stroke="#b4b4b4"/><line x1="189.5" x2="189.5" y1="24.5" y2="30" stroke="#b4b4b4"/><line x1="193.5" x2="193.5" y1="24.5" y2="30" stroke="#b4b4b4"/><line x1="198.5" x2="198.5" y1="24.5" y2="30" stroke="#b4b4b4"/><line x1="202.5" x2="202.5" y1="23.5" y2="30" stroke="#9a9a9a"/><line x1="207.5" x2="207.5" y1="24.5" y2="30" stroke="#b4b4b4"/><line x1="211.5" x2="211.5" y1="24.5" y2="30" stroke="#b4b4b4"/><line x1="216.5" x2="216.5" y1="24.5" y2="30" stroke="#b4b4b4"/><line x1="220.5" x2="220.5" y1="24.5" y2="30" stroke="#b4b4b4"/><line x1="224.5" x2="224.5" y1="21" y2="30" stroke="#1a1a1a"/><line x1="229.5" x2="229.5" y1="24.5" y2="30" stroke="#b4b4b4"/><line x1="233.5" x2="233.5" y1="24.5" y2="30" stroke="#b4b4b4"/><line x1="238.5" x2="238.5" y1="24.5" y2="30" stroke="#b4b4b4"/><line x1="242.5" x2="242.5" y1="24.5" y2="30" stroke="#b4b4b4"/><line x1="247.5" x2="247.5" y1="23.5" y2="30" stroke="#9a9a9a"/><line x1="251.5" x2="251.5" y1="24.5" y2="30" stroke="#b4b4b4"/><line x1="256.5" x2="256.5" y1="24.5" y2="30" stroke="#b4b4b4"/><line x1="260.5" x2="260.5" y1="24.5" y2="30" stroke="#b4b4b4"/><line x1="265.5" x2="265.5" y1="24.5" y2="30" stroke="#b4b4b4"/><line x1="269.5" x2="269.5" y1="23" y2="30" stroke="#7a7a7a"/><line x1="274.5" x2="274.5" y1="24.5" y2="30" stroke="#b4b4b4"/><line x1="278.5" x2="278.5" y1="24.5" y2="30" stroke="#b4b4b4"/><line x1="283.5" x2="283.5" y1="24.5" y2="30" stroke="#b4b4b4"/><line x1="287.5" x2="287.5" y1="24.5" y2="30" stroke="#b4b4b4"/><line x1="292.5" x2="292.5" y1="23.5" y2="30" stroke="#9a9a9a"/><line x1="296.5" x2="296.5" y1="24.5" y2="30" stroke="#b4b4b4"/><line x1="301.5" x2="301.5" y1="24.5" y2="30" stroke="#b4b4b4"/><line x1="305.5" x2="305.5" y1="24.5" y2="30" stroke="#b4b4b4"/><line x1="310.5" x2="310.5" y1="24.5" y2="30" stroke="#b4b4b4"/><line x1="314.5" x2="314.5" y1="23" y2="30" stroke="#7a7a7a"/><line x1="319.5" x2="319.5" y1="24.5" y2="30" stroke="#b4b4b4"/><line x1="323.5" x2="323.5" y1="24.5" y2="30" stroke="#b4b4b4"/><line x1="328.5" x2="328.5" y1="24.5" y2="30" stroke="#b4b4b4"/><line x1="332.5" x2="332.5" y1="24.5" y2="30" stroke="#b4b4b4"/><line x1="337.5" x2="337.5" y1="23.5" y2="30" stroke="#9a9a9a"/><line x1="341.5" x2="341.5" y1="24.5" y2="30" stroke="#b4b4b4"/><line x1="346.5" x2="346.5" y1="24.5" y2="30" stroke="#b4b4b4"/><line x1="350.5" x2="350.5" y1="24.5" y2="30" stroke="#b4b4b4"/><line x1="355.5" x2="355.5" y1="24.5" y2="30" stroke="#b4b4b4"/><line x1="359.5" x2="359.5" y1="23" y2="30" stroke="#7a7a7a"/><line x1="364.5" x2="364.5" y1="24.5" y2="30" stroke="#b4b4b4"/><line x1="368.5" x2="368.5" y1="24.5" y2="30" stroke="#b4b4b4"/><line x1="373.5" x2="373.5" y1="24.5" y2="30" stroke="#b4b4b4"/><line x1="377.5" x2="377.5" y1="24.5" y2="30" stroke="#b4b4b4"/><line x1="382.5" x2="382.5" y1="23.5" y2="30" stroke="#9a9a9a"/><line x1="386.5" x2="386.5" y1="24.5" y2="30" stroke="#b4b4b4"/><line x1="391.5" x2="391.5" y1="24.5" y2="30" stroke="#b4b4b4"/><line x1="395.5" x2="395.5" y1="24.5" y2="30" stroke="#b4b4b4"/><line x1="400.5" x2="400.5" y1="24.5" y2="30" stroke="#b4b4b4"/><line x1="404.5" x2="404.5" y1="23" y2="30" stroke="#7a7a7a"/><line x1="409.5" x2="409.5" y1="24.5" y2="30" stroke="#b4b4b4"/><line x1="413.5" x2="413.5" y1="24.5" y2="30" stroke="#b4b4b4"/><line x1="418.5" x2="418.5" y1="24.5" y2="30" stroke="#b4b4b4"/><line x1="422.5" x2="422.5" y1="24.5" y2="30" stroke="#b4b4b4"/><line x1="427.5" x2="427.5" y1="23.5" y2="30" stroke="#9a9a9a"/><line x1="431.5" x2="431.5" y1="24.5" y2="30" stroke="#b4b4b4"/><line x1="436.5" x2="436.5" y1="24.5" y2="30" stroke="#b4b4b4"/><line x1="440.5" x2="440.5" y1="24.5" y2="30" stroke="#b4b4b4"/><line x1="445.5" x2="445.5" y1="24.5" y2="30" stroke="#b4b4b4"/><line x1="449.5" x2="449.5" y1="21" y2="30" stroke="#1a1a1a"/><line x1="453.5" x2="453.5" y1="24.5" y2="30" stroke="#b4b4b4"/><line x1="458.5" x2="458.5" y1="24.5" y2="30" stroke="#b4b4b4"/><line x1="462.5" x2="462.5" y1="24.5" y2="30" stroke="#b4b4b4"/><line x1="467.5" x2="467.5" y1="24.5" y2="30" stroke="#b4b4b4"/><line x1="471.5" x2="471.5" y1="23.5" y2="30" stroke="#9a9a9a"/><line x1="476.5" x2="476.5" y1="24.5" y2="30" stroke="#b4b4b4"/><line x1="480.5" x2="480.5" y1="24.5" y2="30" stroke="#b4b4b4"/><line x1="485.5" x2="485.5" y1="24.5" y2="30" stroke="#b4b4b4"/><line x1="489.5" x2="489.5" y1="24.5" y2="30" stroke="#b4b4b4"/><line x1="494.5" x2="494.5" y1="23" y2="30" stroke="#7a7a7a"/><line x1="498.5" x2="498.5" y1="24.5" y2="30" stroke="#b4b4b4"/><line x1="503.5" x2="503.5" y1="24.5" y2="30" stroke="#b4b4b4"/><line x1="507.5" x2="507.5" y1="24.5" y2="30" stroke="#b4b4b4"/><line x1="512.5" x2="512.5" y1="24.5" y2="30" stroke="#b4b4b4"/><line x1="516.5" x2="516.5" y1="23.5" y2="30" stroke="#9a9a9a"/><line x1="521.5" x2="521.5" y1="24.5" y2="30" stroke="#b4b4b4"/><line x1="525.5" x2="525.5" y1="24.5" y2="30" stroke="#b4b4b4"/><line x1="530.5" x2="530.5" y1="24.5" y2="30" stroke="#b4b4b4"/><line x1="534.5" x2="534.5" y1="24.5" y2="30" stroke="#b4b4b4"/><line x1="539.5" x2="539.5" y1="23" y2="30" stroke="#7a7a7a"/><line x1="543.5" x2="543.5" y1="24.5" y2="30" stroke="#b4b4b4"/><line x1="548.5" x2="548.5" y1="24.5" y2="30" stroke="#b4b4b4"/><line x1="552.5" x2="552.5" y1="24.5" y2="30" stroke="#b4b4b4"/><line x1="557.5" x2="557.5" y1="24.5" y2="30" stroke="#b4b4b4"/><line x1="561.5" x2="561.5" y1="23.5" y2="30" stroke="#9a9a9a"/><line x1="566.5" x2="566.5" y1="24.5" y2="30" stroke="#b4b4b4"/><line x1="570.5" x2="570.5" y1="24.5" y2="30" stroke="#b4b4b4"/><line x1="575.5" x2="575.5" y1="24.5" y2="30" stroke="#b4b4b4"/><line x1="579.5" x2="579.5" y1="24.5" y2="30" stroke="#b4b4b4"/><line x1="584.5" x2="584.5" y1="23" y2="30" stroke="#7a7a7a"/><line x1="588.5" x2="588.5" y1="24.5" y2="30" stroke="#b4b4b4"/><line x1="593.5" x2="593.5" y1="24.5" y2="30" stroke="#b4b4b4"/><line x1="597.5" x2="597.5" y1="24.5" y2="30" stroke="#b4b4b4"/><line x1="602.5" x2="602.5" y1="24.5" y2="30" stroke="#b4b4b4"/><line x1="606.5" x2="606.5" y1="23.5" y2="30" stroke="#9a9a9a"/><line x1="611.5" x2="611.5" y1="24.5" y2="30" stroke="#b4b4b4"/><line x1="615.5" x2="615.5" y1="24.5" y2="30" stroke="#b4b4b4"/><line x1="620.5" x2="620.5" y1="24.5" y2="30" stroke="#b4b4b4"/><line x1="624.5" x2="624.5" y1="24.5" y2="30" stroke="#b4b4b4"/><line x1="629.5" x2="629.5" y1="23" y2="30" stroke="#7a7a7a"/><line x1="633.5" x2="633.5" y1="24.5" y2="30" stroke="#b4b4b4"/><line x1="638.5" x2="638.5" y1="24.5" y2="30" stroke="#b4b4b4"/><line x1="642.5" x2="642.5" y1="24.5" y2="30" stroke="#b4b4b4"/><line x1="647.5" x2="647.5" y1="24.5" y2="30" stroke="#b4b4b4"/><line x1="651.5" x2="651.5" y1="23.5" y2="30" stroke="#9a9a9a"/><line x1="656.5" x2="656.5" y1="24.5" y2="30" stroke="#b4b4b4"/><line x1="660.5" x2="660.5" y1="24.5" y2="30" stroke="#b4b4b4"/><line x1="665.5" x2="665.5" y1="24.5" y2="30" stroke="#b4b4b4"/><line x1="669.5" x2="669.5" y1="24.5" y2="30" stroke="#b4b4b4"/><line x1="674.5" x2="674.5" y1="21" y2="30" stroke="#1a1a1a"/><line x1="678.5" x2="678.5" y1="24.5" y2="30" stroke="#b4b4b4"/><line x1="682.5" x2="682.5" y1="24.5" y2="30" stroke="#b4b4b4"/><line x1="687.5" x2="687.5" y1="24.5" y2="30" stroke="#b4b4b4"/><line x1="691.5" x2="691.5" y1="24.5" y2="30" stroke="#b4b4b4"/><line x1="696.5" x2="696.5" y1="23.5" y2="30" stroke="#9a9a9a"/><line x1="700.5" x2="700.5" y1="24.5" y2="30" stroke="#b4b4b4"/><line x1="705.5" x2="705.5" y1="24.5" y2="30" stroke="#b4b4b4"/><line x1="709.5" x2="709.5" y1="24.5" y2="30" stroke="#b4b4b4"/><line x1="714.5" x2="714.5" y1="24.5" y2="30" stroke="#b4b4b4"/><line x1="718.5" x2="718.5" y1="23" y2="30" stroke="#7a7a7a"/><line x1="723.5" x2="723.5" y1="24.5" y2="30" stroke="#b4b4b4"/><line x1="727.5" x2="727.5" y1="24.5" y2="30" stroke="#b4b4b4"/><line x1="732.5" x2="732.5" y1="24.5" y2="30" stroke="#b4b4b4"/><line x1="736.5" x2="736.5" y1="24.5" y2="30" stroke="#b4b4b4"/><line x1="741.5" x2="741.5" y1="23.5" y2="30" stroke="#9a9a9a"/><line x1="745.5" x2="745.5" y1="24.5" y2="30" stroke="#b4b4b4"/><line x1="750.5" x2="750.5" y1="24.5" y2="30" stroke="#b4b4b4"/><line x1="754.5" x2="754.5" y1="24.5" y2="30" stroke="#b4b4b4"/><line x1="759.5" x2="759.5" y1="24.5" y2="30" stroke="#b4b4b4"/><line x1="763.5" x2="763.5" y1="23" y2="30" stroke="#7a7a7a"/><line x1="768.5" x2="768.5" y1="24.5" y2="30" stroke="#b4b4b4"/><line x1="772.5" x2="772.5" y1="24.5" y2="30" stroke="#b4b4b4"/><line x1="777.5" x2="777.5" y1="24.5" y2="30" stroke="#b4b4b4"/><line x1="781.5" x2="781.5" y1="24.5" y2="30" stroke="#b4b4b4"/><line x1="786.5" x2="786.5" y1="23.5" y2="30" stroke="#9a9a9a"/><line x1="790.5" x2="790.5" y1="24.5" y2="30" stroke="#b4b4b4"/><line x1="795.5" x2="795.5" y1="24.5" y2="30" stroke="#b4b4b4"/><line x1="799.5" x2="799.5" y1="24.5" y2="30" stroke="#b4b4b4"/><line x1="804.5" x2="804.5" y1="24.5" y2="30" stroke="#b4b4b4"/><line x1="808.5" x2="808.5" y1="23" y2="30" stroke="#7a7a7a"/><line x1="813.5" x2="813.5" y1="24.5" y2="30" stroke="#b4b4b4"/><line x1="817.5" x2="817.5" y1="24.5" y2="30" stroke="#b4b4b4"/><line x1="822.5" x2="822.5" y1="24.5" y2="30" stroke="#b4b4b4"/><line x1="826.5" x2="826.5" y1="24.5" y2="30" stroke="#b4b4b4"/><line x1="831.5" x2="831.5" y1="23.5" y2="30" stroke="#9a9a9a"/><line x1="835.5" x2="835.5" y1="24.5" y2="30" stroke="#b4b4b4"/><line x1="840.5" x2="840.5" y1="24.5" y2="30" stroke="#b4b4b4"/><line x1="844.5" x2="844.5" y1="24.5" y2="30" stroke="#b4b4b4"/><line x1="849.5" x2="849.5" y1="24.5" y2="30" stroke="#b4b4b4"/><line x1="853.5" x2="853.5" y1="23" y2="30" stroke="#7a7a7a"/><line x1="858.5" x2="858.5" y1="24.5" y2="30" stroke="#b4b4b4"/><line x1="862.5" x2="862.5" y1="24.5" y2="30" stroke="#b4b4b4"/><line x1="867.5" x2="867.5" y1="24.5" y2="30" stroke="#b4b4b4"/><line x1="871.5" x2="871.5" y1="24.5" y2="30" stroke="#b4b4b4"/><line x1="876.5" x2="876.5" y1="23.5" y2="30" stroke="#9a9a9a"/><line x1="880.5" x2="880.5" y1="24.5" y2="30" stroke="#b4b4b4"/><line x1="885.5" x2="885.5" y1="24.5" y2="30" stroke="#b4b4b4"/><line x1="889.5" x2="889.5" y1="24.5" y2="30" stroke="#b4b4b4"/><line x1="894.5" x2="894.5" y1="24.5" y2="30" stroke="#b4b4b4"/><line x1="898.5" x2="898.5" y1="21" y2="30" stroke="#1a1a1a"/><line x1="902.5" x2="902.5" y1="24.5" y2="30" stroke="#b4b4b4"/><line x1="907.5" x2="907.5" y1="24.5" y2="30" stroke="#b4b4b4"/><line x1="911.5" x2="911.5" y1="24.5" y2="30" stroke="#b4b4b4"/><line x1="916.5" x2="916.5" y1="24.5" y2="30" stroke="#b4b4b4"/><line x1="920.5" x2="920.5" y1="23.5" y2="30" stroke="#9a9a9a"/><line x1="925.5" x2="925.5" y1="24.5" y2="30" stroke="#b4b4b4"/><line x1="929.5" x2="929.5" y1="24.5" y2="30" stroke="#b4b4b4"/><line x1="934.5" x2="934.5" y1="24.5" y2="30" stroke="#b4b4b4"/><line x1="938.5" x2="938.5" y1="24.5" y2="30" stroke="#b4b4b4"/><line x1="943.5" x2="943.5" y1="23" y2="30" stroke="#7a7a7a"/></svg><span class="rb" style="left:-20.0px">0</span><span class="rs" style="left:24.9px">1</span><span class="rs" style="left:69.8px">2</span><span class="rs" style="left:114.7px">3</span><span class="rs" style="left:159.6px">4</span><span class="rb" style="left:204.5px">5</span><span class="rs" style="left:249.4px">6</span><span class="rs" style="left:294.3px">7</span><span class="rs" style="left:339.2px">8</span><span class="rs" style="left:384.1px">9</span><span class="rb" style="left:429.0px">10</span><span class="rs" style="left:473.9px">11</span><span class="rs" style="left:518.8px">12</span><span class="rs" style="left:563.7px">13</span><span class="rs" style="left:608.6px">14</span><span class="rb" style="left:653.5px">15</span><span class="rs" style="left:698.4px">16</span><span class="rs" style="left:743.3px">17</span><span class="rs" style="left:788.2px">18</span><span class="rs" style="left:833.1px">19</span><span class="rb" style="left:878.0px">20</span></div>
<div id="vruler"><svg class="abs" style="left:-1px;top:0" width="30" height="690" viewBox="0 0 30 690" shape-rendering="crispEdges"><line y1="2.5" y2="2.5" x1="26" x2="30" stroke="#9e9e9e"/><line y1="7.5" y2="7.5" x1="25" x2="30" stroke="#969696"/><line y1="11.5" y2="11.5" x1="26" x2="30" stroke="#9e9e9e"/><line y1="16.5" y2="16.5" x1="26" x2="30" stroke="#9e9e9e"/><line y1="20.5" y2="20.5" x1="26" x2="30" stroke="#9e9e9e"/><line y1="25.5" y2="25.5" x1="26" x2="30" stroke="#9e9e9e"/><line y1="29.5" y2="29.5" x1="24" x2="30" stroke="#8a8a8a"/><line y1="34.5" y2="34.5" x1="26" x2="30" stroke="#9e9e9e"/><line y1="38.5" y2="38.5" x1="26" x2="30" stroke="#9e9e9e"/><line y1="43.5" y2="43.5" x1="26" x2="30" stroke="#9e9e9e"/><line y1="47.5" y2="47.5" x1="26" x2="30" stroke="#9e9e9e"/><line y1="52.5" y2="52.5" x1="25" x2="30" stroke="#969696"/><line y1="56.5" y2="56.5" x1="26" x2="30" stroke="#9e9e9e"/><line y1="61.5" y2="61.5" x1="26" x2="30" stroke="#9e9e9e"/><line y1="65.5" y2="65.5" x1="26" x2="30" stroke="#9e9e9e"/><line y1="70.5" y2="70.5" x1="26" x2="30" stroke="#9e9e9e"/><line y1="74.5" y2="74.5" x1="24" x2="30" stroke="#8a8a8a"/><line y1="78.5" y2="78.5" x1="26" x2="30" stroke="#9e9e9e"/><line y1="83.5" y2="83.5" x1="26" x2="30" stroke="#9e9e9e"/><line y1="87.5" y2="87.5" x1="26" x2="30" stroke="#9e9e9e"/><line y1="92.5" y2="92.5" x1="26" x2="30" stroke="#9e9e9e"/><line y1="96.5" y2="96.5" x1="25" x2="30" stroke="#969696"/><line y1="101.5" y2="101.5" x1="26" x2="30" stroke="#9e9e9e"/><line y1="105.5" y2="105.5" x1="26" x2="30" stroke="#9e9e9e"/><line y1="110.5" y2="110.5" x1="26" x2="30" stroke="#9e9e9e"/><line y1="114.5" y2="114.5" x1="26" x2="30" stroke="#9e9e9e"/><line y1="119.5" y2="119.5" x1="24" x2="30" stroke="#8a8a8a"/><line y1="123.5" y2="123.5" x1="26" x2="30" stroke="#9e9e9e"/><line y1="128.5" y2="128.5" x1="26" x2="30" stroke="#9e9e9e"/><line y1="132.5" y2="132.5" x1="26" x2="30" stroke="#9e9e9e"/><line y1="137.5" y2="137.5" x1="26" x2="30" stroke="#9e9e9e"/><line y1="141.5" y2="141.5" x1="25" x2="30" stroke="#969696"/><line y1="146.5" y2="146.5" x1="26" x2="30" stroke="#9e9e9e"/><line y1="150.5" y2="150.5" x1="26" x2="30" stroke="#9e9e9e"/><line y1="155.5" y2="155.5" x1="26" x2="30" stroke="#9e9e9e"/><line y1="159.5" y2="159.5" x1="26" x2="30" stroke="#9e9e9e"/><line y1="164.5" y2="164.5" x1="24" x2="30" stroke="#8a8a8a"/><line y1="168.5" y2="168.5" x1="26" x2="30" stroke="#9e9e9e"/><line y1="173.5" y2="173.5" x1="26" x2="30" stroke="#9e9e9e"/><line y1="177.5" y2="177.5" x1="26" x2="30" stroke="#9e9e9e"/><line y1="182.5" y2="182.5" x1="26" x2="30" stroke="#9e9e9e"/><line y1="186.5" y2="186.5" x1="25" x2="30" stroke="#969696"/><line y1="191.5" y2="191.5" x1="26" x2="30" stroke="#9e9e9e"/><line y1="195.5" y2="195.5" x1="26" x2="30" stroke="#9e9e9e"/><line y1="200.5" y2="200.5" x1="26" x2="30" stroke="#9e9e9e"/><line y1="204.5" y2="204.5" x1="26" x2="30" stroke="#9e9e9e"/><line y1="209.5" y2="209.5" x1="22" x2="30" stroke="#222"/><line y1="213.5" y2="213.5" x1="26" x2="30" stroke="#9e9e9e"/><line y1="218.5" y2="218.5" x1="26" x2="30" stroke="#9e9e9e"/><line y1="222.5" y2="222.5" x1="26" x2="30" stroke="#9e9e9e"/><line y1="227.5" y2="227.5" x1="26" x2="30" stroke="#9e9e9e"/><line y1="231.5" y2="231.5" x1="25" x2="30" stroke="#969696"/><line y1="236.5" y2="236.5" x1="26" x2="30" stroke="#9e9e9e"/><line y1="240.5" y2="240.5" x1="26" x2="30" stroke="#9e9e9e"/><line y1="245.5" y2="245.5" x1="26" x2="30" stroke="#9e9e9e"/><line y1="249.5" y2="249.5" x1="26" x2="30" stroke="#9e9e9e"/><line y1="254.5" y2="254.5" x1="24" x2="30" stroke="#8a8a8a"/><line y1="258.5" y2="258.5" x1="26" x2="30" stroke="#9e9e9e"/><line y1="263.5" y2="263.5" x1="26" x2="30" stroke="#9e9e9e"/><line y1="267.5" y2="267.5" x1="26" x2="30" stroke="#9e9e9e"/><line y1="272.5" y2="272.5" x1="26" x2="30" stroke="#9e9e9e"/><line y1="276.5" y2="276.5" x1="25" x2="30" stroke="#969696"/><line y1="281.5" y2="281.5" x1="26" x2="30" stroke="#9e9e9e"/><line y1="285.5" y2="285.5" x1="26" x2="30" stroke="#9e9e9e"/><line y1="290.5" y2="290.5" x1="26" x2="30" stroke="#9e9e9e"/><line y1="294.5" y2="294.5" x1="26" x2="30" stroke="#9e9e9e"/><line y1="298.5" y2="298.5" x1="24" x2="30" stroke="#8a8a8a"/><line y1="303.5" y2="303.5" x1="26" x2="30" stroke="#9e9e9e"/><line y1="307.5" y2="307.5" x1="26" x2="30" stroke="#9e9e9e"/><line y1="312.5" y2="312.5" x1="26" x2="30" stroke="#9e9e9e"/><line y1="316.5" y2="316.5" x1="26" x2="30" stroke="#9e9e9e"/><line y1="321.5" y2="321.5" x1="25" x2="30" stroke="#969696"/><line y1="325.5" y2="325.5" x1="26" x2="30" stroke="#9e9e9e"/><line y1="330.5" y2="330.5" x1="26" x2="30" stroke="#9e9e9e"/><line y1="334.5" y2="334.5" x1="26" x2="30" stroke="#9e9e9e"/><line y1="339.5" y2="339.5" x1="26" x2="30" stroke="#9e9e9e"/><line y1="343.5" y2="343.5" x1="24" x2="30" stroke="#8a8a8a"/><line y1="348.5" y2="348.5" x1="26" x2="30" stroke="#9e9e9e"/><line y1="352.5" y2="352.5" x1="26" x2="30" stroke="#9e9e9e"/><line y1="357.5" y2="357.5" x1="26" x2="30" stroke="#9e9e9e"/><line y1="361.5" y2="361.5" x1="26" x2="30" stroke="#9e9e9e"/><line y1="366.5" y2="366.5" x1="25" x2="30" stroke="#969696"/><line y1="370.5" y2="370.5" x1="26" x2="30" stroke="#9e9e9e"/><line y1="375.5" y2="375.5" x1="26" x2="30" stroke="#9e9e9e"/><line y1="379.5" y2="379.5" x1="26" x2="30" stroke="#9e9e9e"/><line y1="384.5" y2="384.5" x1="26" x2="30" stroke="#9e9e9e"/><line y1="388.5" y2="388.5" x1="24" x2="30" stroke="#8a8a8a"/><line y1="393.5" y2="393.5" x1="26" x2="30" stroke="#9e9e9e"/><line y1="397.5" y2="397.5" x1="26" x2="30" stroke="#9e9e9e"/><line y1="402.5" y2="402.5" x1="26" x2="30" stroke="#9e9e9e"/><line y1="406.5" y2="406.5" x1="26" x2="30" stroke="#9e9e9e"/><line y1="411.5" y2="411.5" x1="25" x2="30" stroke="#969696"/><line y1="415.5" y2="415.5" x1="26" x2="30" stroke="#9e9e9e"/><line y1="420.5" y2="420.5" x1="26" x2="30" stroke="#9e9e9e"/><line y1="424.5" y2="424.5" x1="26" x2="30" stroke="#9e9e9e"/><line y1="429.5" y2="429.5" x1="26" x2="30" stroke="#9e9e9e"/><line y1="433.5" y2="433.5" x1="22" x2="30" stroke="#222"/><line y1="438.5" y2="438.5" x1="26" x2="30" stroke="#9e9e9e"/><line y1="442.5" y2="442.5" x1="26" x2="30" stroke="#9e9e9e"/><line y1="447.5" y2="447.5" x1="26" x2="30" stroke="#9e9e9e"/><line y1="451.5" y2="451.5" x1="26" x2="30" stroke="#9e9e9e"/><line y1="456.5" y2="456.5" x1="25" x2="30" stroke="#969696"/><line y1="460.5" y2="460.5" x1="26" x2="30" stroke="#9e9e9e"/><line y1="465.5" y2="465.5" x1="26" x2="30" stroke="#9e9e9e"/><line y1="469.5" y2="469.5" x1="26" x2="30" stroke="#9e9e9e"/><line y1="474.5" y2="474.5" x1="26" x2="30" stroke="#9e9e9e"/><line y1="478.5" y2="478.5" x1="24" x2="30" stroke="#8a8a8a"/><line y1="483.5" y2="483.5" x1="26" x2="30" stroke="#9e9e9e"/><line y1="487.5" y2="487.5" x1="26" x2="30" stroke="#9e9e9e"/><line y1="492.5" y2="492.5" x1="26" x2="30" stroke="#9e9e9e"/><line y1="496.5" y2="496.5" x1="26" x2="30" stroke="#9e9e9e"/><line y1="501.5" y2="501.5" x1="25" x2="30" stroke="#969696"/><line y1="505.5" y2="505.5" x1="26" x2="30" stroke="#9e9e9e"/><line y1="510.5" y2="510.5" x1="26" x2="30" stroke="#9e9e9e"/><line y1="514.5" y2="514.5" x1="26" x2="30" stroke="#9e9e9e"/><line y1="519.5" y2="519.5" x1="26" x2="30" stroke="#9e9e9e"/><line y1="523.5" y2="523.5" x1="24" x2="30" stroke="#8a8a8a"/><line y1="527.5" y2="527.5" x1="26" x2="30" stroke="#9e9e9e"/><line y1="532.5" y2="532.5" x1="26" x2="30" stroke="#9e9e9e"/><line y1="536.5" y2="536.5" x1="26" x2="30" stroke="#9e9e9e"/><line y1="541.5" y2="541.5" x1="26" x2="30" stroke="#9e9e9e"/><line y1="545.5" y2="545.5" x1="25" x2="30" stroke="#969696"/><line y1="550.5" y2="550.5" x1="26" x2="30" stroke="#9e9e9e"/><line y1="554.5" y2="554.5" x1="26" x2="30" stroke="#9e9e9e"/><line y1="559.5" y2="559.5" x1="26" x2="30" stroke="#9e9e9e"/><line y1="563.5" y2="563.5" x1="26" x2="30" stroke="#9e9e9e"/><line y1="568.5" y2="568.5" x1="24" x2="30" stroke="#8a8a8a"/><line y1="572.5" y2="572.5" x1="26" x2="30" stroke="#9e9e9e"/><line y1="577.5" y2="577.5" x1="26" x2="30" stroke="#9e9e9e"/><line y1="581.5" y2="581.5" x1="26" x2="30" stroke="#9e9e9e"/><line y1="586.5" y2="586.5" x1="26" x2="30" stroke="#9e9e9e"/><line y1="590.5" y2="590.5" x1="25" x2="30" stroke="#969696"/><line y1="595.5" y2="595.5" x1="26" x2="30" stroke="#9e9e9e"/><line y1="599.5" y2="599.5" x1="26" x2="30" stroke="#9e9e9e"/><line y1="604.5" y2="604.5" x1="26" x2="30" stroke="#9e9e9e"/><line y1="608.5" y2="608.5" x1="26" x2="30" stroke="#9e9e9e"/><line y1="613.5" y2="613.5" x1="24" x2="30" stroke="#8a8a8a"/><line y1="617.5" y2="617.5" x1="26" x2="30" stroke="#9e9e9e"/><line y1="622.5" y2="622.5" x1="26" x2="30" stroke="#9e9e9e"/><line y1="626.5" y2="626.5" x1="26" x2="30" stroke="#9e9e9e"/><line y1="631.5" y2="631.5" x1="26" x2="30" stroke="#9e9e9e"/><line y1="635.5" y2="635.5" x1="25" x2="30" stroke="#969696"/><line y1="640.5" y2="640.5" x1="26" x2="30" stroke="#9e9e9e"/><line y1="644.5" y2="644.5" x1="26" x2="30" stroke="#9e9e9e"/><line y1="649.5" y2="649.5" x1="26" x2="30" stroke="#9e9e9e"/><line y1="653.5" y2="653.5" x1="26" x2="30" stroke="#9e9e9e"/><line y1="658.5" y2="658.5" x1="22" x2="30" stroke="#222"/><line y1="662.5" y2="662.5" x1="26" x2="30" stroke="#9e9e9e"/><line y1="667.5" y2="667.5" x1="26" x2="30" stroke="#9e9e9e"/><line y1="671.5" y2="671.5" x1="26" x2="30" stroke="#9e9e9e"/><line y1="676.5" y2="676.5" x1="26" x2="30" stroke="#9e9e9e"/><line y1="680.5" y2="680.5" x1="25" x2="30" stroke="#969696"/><line y1="685.5" y2="685.5" x1="26" x2="30" stroke="#9e9e9e"/><line y1="689.5" y2="689.5" x1="26" x2="30" stroke="#9e9e9e"/></svg><span class="vs" style="top:22.1px">1</span><span class="vs" style="top:67.0px">2</span><span class="vs" style="top:111.9px">3</span><span class="vs" style="top:156.8px">4</span><span class="vb" style="top:201.7px">5</span><span class="vs" style="top:246.6px">6</span><span class="vs" style="top:291.5px">7</span><span class="vs" style="top:336.4px">8</span><span class="vs" style="top:381.3px">9</span><span class="vb" style="top:426.2px">10</span><span class="vs" style="top:471.1px">11</span><span class="vs" style="top:516.0px">12</span><span class="vs" style="top:560.9px">13</span><span class="vs" style="top:605.8px">14</span><span class="vb" style="top:650.7px">15</span><i class="cur"></i></div>
<div id="rcorner"></div><div id="vband"></div><i id="hcur"></i>
<div id="rband"></div>
<div id="vsb"><i></i></div>
<div id="hsb"><i></i></div>
<div id="sbcorner"></div>
</div>
<div id="msg"><i class="mi"><b></b><b></b><b></b></i><span>Nessuna eccezione</span></div>
<div id="toolbox">
<div class="tgrip"></div>
<div class="tsel"></div>
<div class="tool" style="top:15px"><svg width="32" height="32" viewBox="0 0 32 32"><path d="M4 1H28Q31 1 31 4V28Q31 31 28 31H4Q1 31 1 28V4Q1 1 4 1Z" fill="url(#gb)" stroke="#f6f6f6" stroke-width="1.5" stroke-linejoin="round" paint-order="stroke"/><path d="M1.600 4V28M30.400 4V28" stroke="#7f92b3" stroke-width="1" opacity=".55"/><path d="M5.900 6.200L10 8.700L13.900 6.200M10 8.500V23.500M5.900 26.200L10 23.400L13.900 26.200" fill="none" stroke="#f4f4f4" stroke-width="1.500" stroke-linecap="round"/><path d="M16.200 8.300V21.700L20.300 20.500L22.800 25.300L24.900 24.400L22.800 20.300L26.900 18.200Z" fill="#ececec" stroke="#ececec" stroke-width=".5" stroke-linejoin="round"/></svg></div>
<div class="tool" style="top:61px"><svg width="32" height="32" viewBox="0 0 32 32"><path d="M4 1H28Q31 1 31 4V28Q31 31 28 31H4Q1 31 1 28V4Q1 1 4 1Z" fill="url(#gb)" stroke="#f6f6f6" stroke-width="1.5" stroke-linejoin="round" paint-order="stroke"/><path d="M1.600 4V28M30.400 4V28" stroke="#7f92b3" stroke-width="1" opacity=".55"/><rect x="4.90" y="6.10" width="22.00" height="3.70" rx="1.60" fill="#60739a" opacity=".55"/><rect x="4.90" y="5.00" width="22.00" height="3.70" rx="1.60" fill="#bec9db"/><rect x="5.25" y="5.35" width="21.30" height="3.00" rx="1.60" fill="none" stroke="#ccd6e4" stroke-width=".7"/><rect x="4.90" y="12.10" width="22.00" height="9.90" rx="1.60" fill="#60739a" opacity=".55"/><rect x="4.90" y="11.00" width="22.00" height="9.90" rx="1.60" fill="#ececec"/><rect x="5.30" y="11.40" width="21.20" height="9.10" rx="1.60" fill="none" stroke="#fbfbfb" stroke-width=".8"/><rect x="4.90" y="24.00" width="22.00" height="4.00" rx="1.60" fill="#60739a" opacity=".55"/><rect x="4.90" y="22.90" width="22.00" height="4.00" rx="1.60" fill="#bec9db"/><rect x="5.25" y="23.25" width="21.30" height="3.30" rx="1.60" fill="none" stroke="#ccd6e4" stroke-width=".7"/></svg></div>
<div class="tool" style="top:107px"><svg width="32" height="32" viewBox="0 0 32 32"><path d="M4 1H28Q31 1 31 4V28Q31 31 28 31H4Q1 31 1 28V4Q1 1 4 1Z" fill="url(#gb)" stroke="#f6f6f6" stroke-width="1.5" stroke-linejoin="round" paint-order="stroke"/><path d="M1.600 4V28M30.400 4V28" stroke="#7f92b3" stroke-width="1" opacity=".55"/><rect x="4.90" y="6.10" width="22.00" height="3.70" rx="1.60" fill="#60739a" opacity=".55"/><rect x="4.90" y="5.00" width="22.00" height="3.70" rx="1.60" fill="#ececec"/><rect x="5.30" y="5.40" width="21.20" height="2.90" rx="1.60" fill="none" stroke="#fbfbfb" stroke-width=".8"/><rect x="4.90" y="12.10" width="22.00" height="9.90" rx="1.60" fill="#60739a" opacity=".55"/><rect x="4.90" y="11.00" width="22.00" height="9.90" rx="1.60" fill="#bec9db"/><rect x="5.25" y="11.35" width="21.30" height="9.20" rx="1.60" fill="none" stroke="#ccd6e4" stroke-width=".7"/><rect x="4.90" y="24.00" width="22.00" height="4.00" rx="1.60" fill="#60739a" opacity=".55"/><rect x="4.90" y="22.90" width="22.00" height="4.00" rx="1.60" fill="#bec9db"/><rect x="5.25" y="23.25" width="21.30" height="3.30" rx="1.60" fill="none" stroke="#ccd6e4" stroke-width=".7"/></svg></div>
<div class="tool" style="top:153px"><svg width="32" height="32" viewBox="0 0 32 32"><path d="M4 1H28Q31 1 31 4V28Q31 31 28 31H4Q1 31 1 28V4Q1 1 4 1Z" fill="url(#gb)" stroke="#f6f6f6" stroke-width="1.5" stroke-linejoin="round" paint-order="stroke"/><path d="M1.600 4V28M30.400 4V28" stroke="#7f92b3" stroke-width="1" opacity=".55"/><rect x="4.90" y="6.10" width="22.00" height="3.70" rx="1.60" fill="#60739a" opacity=".55"/><rect x="4.90" y="5.00" width="22.00" height="3.70" rx="1.60" fill="#bec9db"/><rect x="5.25" y="5.35" width="21.30" height="3.00" rx="1.60" fill="none" stroke="#ccd6e4" stroke-width=".7"/><rect x="4.90" y="12.10" width="22.00" height="9.90" rx="1.60" fill="#60739a" opacity=".55"/><rect x="4.90" y="11.00" width="22.00" height="9.90" rx="1.60" fill="#bec9db"/><rect x="5.25" y="11.35" width="21.30" height="9.20" rx="1.60" fill="none" stroke="#ccd6e4" stroke-width=".7"/><rect x="4.90" y="24.00" width="22.00" height="4.00" rx="1.60" fill="#60739a" opacity=".55"/><rect x="4.90" y="22.90" width="22.00" height="4.00" rx="1.60" fill="#ececec"/><rect x="5.30" y="23.30" width="21.20" height="3.20" rx="1.60" fill="none" stroke="#fbfbfb" stroke-width=".8"/></svg></div>
<div class="tool" style="top:199px"><svg width="32" height="32" viewBox="0 0 32 32"><path d="M4 1H28Q31 1 31 4V28Q31 31 28 31H4Q1 31 1 28V4Q1 1 4 1Z" fill="url(#gb)" stroke="#f6f6f6" stroke-width="1.5" stroke-linejoin="round" paint-order="stroke"/><path d="M1.600 4V28M30.400 4V28" stroke="#7f92b3" stroke-width="1" opacity=".55"/><rect x="4.90" y="6.10" width="22.00" height="3.70" rx="1.60" fill="#60739a" opacity=".55"/><rect x="4.90" y="5.00" width="22.00" height="3.70" rx="1.60" fill="#ececec"/><rect x="5.30" y="5.40" width="21.20" height="2.90" rx="1.60" fill="none" stroke="#fbfbfb" stroke-width=".8"/><rect x="4.90" y="12.30" width="22.00" height="3.50" rx="1.60" fill="#60739a" opacity=".55"/><rect x="4.90" y="11.20" width="22.00" height="3.50" rx="1.60" fill="#bec9db"/><rect x="5.25" y="11.55" width="21.30" height="2.80" rx="1.60" fill="none" stroke="#ccd6e4" stroke-width=".7"/><rect x="4.90" y="18.10" width="22.00" height="3.70" rx="1.60" fill="#60739a" opacity=".55"/><rect x="4.90" y="17.00" width="22.00" height="3.70" rx="1.60" fill="#bec9db"/><rect x="5.25" y="17.35" width="21.30" height="3.00" rx="1.60" fill="none" stroke="#ccd6e4" stroke-width=".7"/><rect x="4.90" y="24.00" width="22.00" height="4.00" rx="1.60" fill="#60739a" opacity=".55"/><rect x="4.90" y="22.90" width="22.00" height="4.00" rx="1.60" fill="#bec9db"/><rect x="5.25" y="23.25" width="21.30" height="3.30" rx="1.60" fill="none" stroke="#ccd6e4" stroke-width=".7"/></svg></div>
<div class="tool" style="top:245px"><svg width="32" height="32" viewBox="0 0 32 32"><path d="M4 1H28Q31 1 31 4V28Q31 31 28 31H4Q1 31 1 28V4Q1 1 4 1Z" fill="url(#gb)" stroke="#f6f6f6" stroke-width="1.5" stroke-linejoin="round" paint-order="stroke"/><path d="M1.600 4V28M30.400 4V28" stroke="#7f92b3" stroke-width="1" opacity=".55"/><clipPath id="ca"><path clip-rule="evenodd" d="M13 4.600H17L26.100 26.900H19.900L18.800 23.600H12.900L11.700 26.900H5.700ZM15.300 13.500L17.600 20H13Z"/></clipPath><g clip-path="url(#ca)"><path d="M0.00 24.60L32.00 10.52" stroke="#f7f7f7" stroke-width="1.50"/><path d="M0.00 20.35L32.00 6.27" stroke="#f7f7f7" stroke-width="1.50"/><path d="M0.00 16.10L32.00 2.02" stroke="#f7f7f7" stroke-width="1.50"/><path d="M0.00 11.80L32.00 -2.28" stroke="#f7f7f7" stroke-width="1.50"/><path d="M0 28.500L32 14.420V32H0Z" fill="#ececec"/></g></svg></div>
<div class="tool" style="top:291px"><svg width="32" height="32" viewBox="0 0 32 32"><path d="M4 1H28Q31 1 31 4V28Q31 31 28 31H4Q1 31 1 28V4Q1 1 4 1Z" fill="url(#gb)" stroke="#f6f6f6" stroke-width="1.5" stroke-linejoin="round" paint-order="stroke"/><path d="M1.600 4V28M30.400 4V28" stroke="#7f92b3" stroke-width="1" opacity=".55"/><path d="M17.600 17.900L25 25" stroke="#5f7299" stroke-width="3.200" stroke-linecap="round" opacity=".4" transform="translate(0,.9)"/><path d="M17.800 17.900L25 24.900" stroke="#f6f6f6" stroke-width="3.100" stroke-linecap="round"/><path d="M5.300 4.600L17.600 17.300" stroke="#f6f6f6" stroke-width="2.300" stroke-dasharray="2.300 2.100"/></svg></div>
<div class="tool" style="top:337px"><svg width="32" height="32" viewBox="0 0 32 32"><path d="M4 1H28Q31 1 31 4V28Q31 31 28 31H4Q1 31 1 28V4Q1 1 4 1Z" fill="url(#gb)" stroke="#f6f6f6" stroke-width="1.5" stroke-linejoin="round" paint-order="stroke"/><path d="M1.600 4V28M30.400 4V28" stroke="#7f92b3" stroke-width="1" opacity=".55"/><clipPath id="cr"><rect x="4.900" y="7.900" width="22" height="16.100" rx="1.600"/></clipPath><rect x="4.900" y="9" width="22" height="16.100" rx="1.600" fill="#60739a" opacity=".45"/><g clip-path="url(#cr)"><path d="M4.90 8.65L32.00 -1.92" stroke="#f7f7f7" stroke-width="1.70"/><path d="M4.90 13.05L32.00 2.48" stroke="#f7f7f7" stroke-width="1.70"/><path d="M4.90 17.45L32.00 6.88" stroke="#f7f7f7" stroke-width="1.70"/><path d="M4.90 21.85L32.00 11.28" stroke="#f7f7f7" stroke-width="1.70"/><path d="M4.900 25.830L32 15.260V32H4.900Z" fill="#ececec"/></g></svg></div>
<div class="tool" style="top:383px"><svg width="32" height="32" viewBox="0 0 32 32"><path d="M4 1H28Q31 1 31 4V28Q31 31 28 31H4Q1 31 1 28V4Q1 1 4 1Z" fill="url(#gb)" stroke="#f6f6f6" stroke-width="1.5" stroke-linejoin="round" paint-order="stroke"/><path d="M1.600 4V28M30.400 4V28" stroke="#7f92b3" stroke-width="1" opacity=".55"/><circle cx="24.900" cy="7.100" r="1.950" fill="#fbfbfb"/><path d="M9.400 10.400L20.700 27.900H6.500Q4.050 27.900 4.050 25.400V18.200Z" fill="#ececec"/><path d="M23 14.900L27.950 21.700V25.400Q27.950 27.900 25.400 27.900H23.700L18.900 20.500Z" fill="#ececec"/></svg></div>
<div class="tool" style="top:429px"><svg width="32" height="32" viewBox="0 0 32 32"><path d="M4 1H28Q31 1 31 4V28Q31 31 28 31H4Q1 31 1 28V4Q1 1 4 1Z" fill="url(#gb)" stroke="#f6f6f6" stroke-width="1.5" stroke-linejoin="round" paint-order="stroke"/><path d="M1.600 4V28M30.400 4V28" stroke="#7f92b3" stroke-width="1" opacity=".55"/><path d="M7.700 5.100H17V13.700H25.900V27Q25.900 29 23.900 29H7.700Q5.700 29 5.700 27V7.100Q5.700 5.100 7.700 5.100Z" fill="#60739a" opacity=".45"/><path d="M7.700 4H17V12.600H25.900V25.900Q25.900 27.900 23.900 27.900H7.700Q5.700 27.900 5.700 25.900V6Q5.700 4 7.700 4Z" fill="#ececec"/><path d="M18.900 5L25.500 10.600H18.900Z" fill="#ececec"/><text x="16" y="25.500" font-family="Liberation Sans, sans-serif" font-weight="bold" font-size="13.800" text-anchor="middle" letter-spacing=".8" fill="#7d90b1" stroke="#7d90b1" stroke-width=".5">-3-</text></svg></div>
<div class="tool" style="top:475px"><svg width="32" height="32" viewBox="0 0 32 32"><path d="M4 1H28Q31 1 31 4V28Q31 31 28 31H4Q1 31 1 28V4Q1 1 4 1Z" fill="url(#gb)" stroke="#f6f6f6" stroke-width="1.5" stroke-linejoin="round" paint-order="stroke"/><path d="M1.600 4V28M30.400 4V28" stroke="#7f92b3" stroke-width="1" opacity=".55"/><circle cx="15.900" cy="15.850" r="11" fill="#ececec"/><path d="M9.800 10.900L16 16.500L22.600 10.600" fill="none" stroke="#8b9ebf" stroke-width="3.200" stroke-linecap="round" stroke-linejoin="round"/><rect x="17.200" y="17.300" width="14" height="14" rx="3" fill="#93a6c5"/><rect x="18.900" y="19" width="9.900" height="9.900" rx="2.400" fill="#fbfbfb"/><rect x="20.03" y="22.03" width="1.850" height="1.850" fill="#7d90b1"/><rect x="20.03" y="25.13" width="1.850" height="1.850" fill="#7d90b1"/><rect x="23.08" y="22.03" width="1.850" height="1.850" fill="#7d90b1"/><rect x="23.08" y="25.13" width="1.850" height="1.850" fill="#7d90b1"/><rect x="26.08" y="22.03" width="1.850" height="1.850" fill="#7d90b1"/><rect x="26.08" y="25.13" width="1.850" height="1.850" fill="#7d90b1"/></svg></div>
</div>
<div id="status"><span class="s1">1 elemento selezionato (Testo 'testo_3')</span><span class="s2">Da (8.61, 2.77) a (20.07, 3.27) – (11.46, 0.50) cm</span><span class="s3">Zoom:</span><div class="zc"><span>100%</span><i></i><b></b></div><div class="zb" style="left:1376px"><i class="h"></i><i class="v"></i></div><div class="zb" style="left:1396px"><i class="h"></i></div><svg class="rsz" width="14" height="14" viewBox="0 0 14 14"><path d="M13 1L1 13M13 5L5 13M13 9L9 13" stroke="#7a7a7a" stroke-width="1" fill="none"/></svg></div>
</body>
</html>
